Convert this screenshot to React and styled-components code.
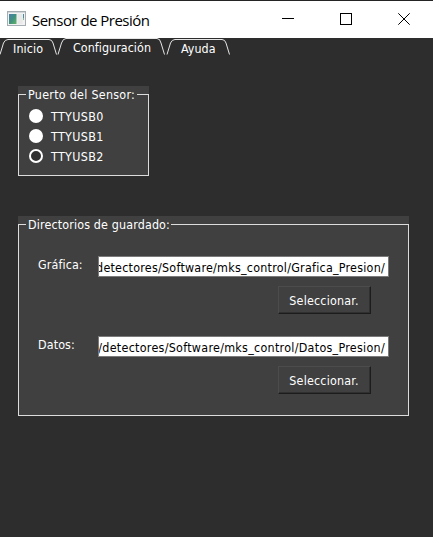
import React from "react";
import styled, { createGlobalStyle } from "styled-components";

const GlobalStyle = createGlobalStyle`
  body { margin: 0; background: #2d2d2d; }
  * { box-sizing: border-box; }
`;

const Window = styled.main`
  width: 433px;
  height: 537px;
  overflow: hidden;
  display: flex;
  flex-direction: column;
  background: #2d2d2d;
  color: #fff;
  font: 12.4px/16px "DejaVu Sans Condensed", "DejaVu Sans", sans-serif;
  font-stretch: condensed;
  white-space: nowrap;
`;

const Label = styled.span`
  display: block;
  letter-spacing: ${(p) => p.$track || 0}px;
`;

const TitleBar = styled.header`
  height: 38px;
  flex: none;
  display: flex;
  align-items: center;
  background: #fff;
  border-top: 1px solid #242424;
  padding-left: 7px;
  color: #000;
`;

const Title = styled.h1`
  flex: 1;
  margin: 0 0 0 6px;
  font: 400 15px/20px "Open Sans", "Noto Sans", sans-serif;
  letter-spacing: -0.52px;
`;

const WindowButton = styled.button`
  width: 58px;
  height: 37px;
  padding: 0;
  border: 0;
  background: none;
  display: grid;
  place-items: center;
  svg { display: block; }
`;

const Tabs = styled.nav`
  display: flex;
  height: 18px;
  flex: none;
`;

const TabBox = styled.div`
  position: relative;
  width: ${(p) => p.$width}px;
  margin-right: 1px;
  padding: ${(p) => (p.$active ? 2 : 3)}px 0 0 ${(p) => p.$inset}px;
`;

const TabOutline = styled.svg`
  position: absolute;
  left: 0;
  top: 0;
  overflow: visible;
`;

const Page = styled.div`
  padding: 30px 0 0 18px;
`;

const Group = styled.section`
  width: ${(p) => p.$width}px;
  height: ${(p) => p.$height}px;
  margin-bottom: 40px;
  padding-top: 8px;
  background: #404040;
`;

const GroupFrame = styled.fieldset`
  height: 100%;
  min-width: 0;
  margin: 0;
  padding: 0;
  border: 1px solid #dcdcdc;
  border-top: 0;
`;

const GroupHeading = styled.div`
  display: flex;
  height: 1px;
  &::before, &::after { content: ""; height: 1px; background: #dcdcdc; }
  &::before { width: 7px; }
  &::after { flex: 1; }
`;

const GroupTitle = styled.div`
  width: ${(p) => p.$width}px;
  height: 16px;
  margin-top: -7px;
  padding-left: 2px;
`;

const Options = styled.div`
  padding: 11px 0 0 10px;
`;

const Option = styled.label`
  display: flex;
  align-items: center;
  height: 20px;
  gap: 8px;
  & > span { padding-top: 2px; }
`;

const Radio = styled.i`
  width: 14px;
  height: 14px;
  border: 2px solid #fff;
  border-radius: 50%;
  background: ${(p) => (p.$checked ? "#303030" : "#fff")};
`;

const Directory = styled.div`
  height: 80px;
  padding: 0 19px;
`;

const Directories = styled.div`
  padding-top: 31px;
`;

const Field = styled.div`
  display: flex;
  height: 21px;
`;

const FieldName = styled.div`
  width: 60px;
  padding-top: 1px;
`;

const PathBox = styled.div`
  width: 291px;
  height: 21px;
  border: 1px solid #7a7a7a;
  background: #fff;
  color: #000;
  display: flex;
  justify-content: flex-end;
  overflow: hidden;
  padding: 3px 3px 0 0;
`;

const Button = styled.button`
  display: block;
  width: 93px;
  height: 28px;
  margin: 9px 0 0 240px;
  padding: 2px 1px 0 0;
  font: inherit;
  font-stretch: condensed;
  color: #fff;
  background: #404040;
  border: solid;
  border-width: 1px;
  border-color: #4c4c4c #1c1c1c #1c1c1c #4c4c4c;
  box-shadow: inset -1px -1px #303030;
`;

const IconSvg = styled.svg`
  margin-bottom: 2px;
`;

function AppIcon() {
  return (
    <IconSvg width="19" height="15" viewBox="0 0 19 15">
      <defs>
        <linearGradient id="screen" x1="0" y1="0" x2="1" y2="1">
          <stop offset="0" stopColor="#4b7fae" />
          <stop offset=".5" stopColor="#40917f" />
          <stop offset="1" stopColor="#63b665" />
        </linearGradient>
      </defs>
      <rect x=".5" y=".5" width="18" height="14" fill="#f2f2f2" stroke="#a6adb2" />
      <rect x="2" y="3" width="7.5" height="10" fill="url(#screen)" />
      <path d="M1 1.5H18" stroke="#d3d8dc" />
      <path d="M10.5 3H15.5V13H10.5Z" fill="#e9e9e9" />
      <path d="M16.5 3V7" stroke="#4a8f9b" />
      <path d="M16.5 7V9" stroke="#8bb6a0" />
    </IconSvg>
  );
}

function Tab({ label, width, line, inset, active, track }) {
  const top = active ? 0.5 : 1.5;
  const d = `M0 16.5L3.5 5Q5 ${top} 8 ${top}H${line}Q${line + 3} ${top} ${line + 4} 5L${line + 7.5} 16.5`;
  return (
    <TabBox $width={width} $inset={inset} $active={active}>
      <TabOutline width={width} height="18">
        <path d={d} fill="none" stroke="#e6e6e6" />
      </TabOutline>
      <Label $track={track}>{label}</Label>
    </TabBox>
  );
}

function GroupBox({ title, titleWidth, track, width, height, children }) {
  return (
    <Group $width={width} $height={height}>
      <GroupFrame>
        <GroupHeading>
          <GroupTitle $width={titleWidth}><Label $track={track}>{title}</Label></GroupTitle>
        </GroupHeading>
        {children}
      </GroupFrame>
    </Group>
  );
}

function DirectoryRow({ name, path, nameTrack, pathTrack }) {
  return (
    <Directory>
      <Field>
        <FieldName><Label $track={nameTrack}>{name}</Label></FieldName>
        <PathBox><Label $track={pathTrack}>{path}</Label></PathBox>
      </Field>
      <Button><Label $track={0.2}>Seleccionar.</Label></Button>
    </Directory>
  );
}

export default function App() {
  return (
    <>
      <GlobalStyle />
      <Window>
        <TitleBar>
          <AppIcon />
          <Title>Sensor de Presión</Title>
          <WindowButton aria-label="Minimizar">
            <svg width="12" height="13"><path d="M0 5.5H12" stroke="#000" /></svg>
          </WindowButton>
          <WindowButton aria-label="Maximizar">
            <svg width="12" height="13"><rect x=".5" y=".5" width="11" height="11" fill="none" stroke="#000" /></svg>
          </WindowButton>
          <WindowButton aria-label="Cerrar">
            <svg width="12" height="13"><path d="M.3 .3L11.7 11.7M11.7 .3L.3 11.7" stroke="#000" /></svg>
          </WindowButton>
        </TitleBar>
        <Tabs>
          <Tab label="Inicio" width={57} line={49} inset={13} track={0.1} />
          <Tab label="Configuración" width={108} line={99} inset={15} track={0.05} active />
          <Tab label="Ayuda" width={64} line={55} inset={14} track={0.05} />
        </Tabs>
        <Page>
          <GroupBox title="Puerto del Sensor:" titleWidth={111} track={0.28} width={131} height={90}>
            <Options>
              {["TTYUSB0", "TTYUSB1", "TTYUSB2"].map((port, i) => (
                <Option key={port}><Radio $checked={i === 2} /><Label $track={0.35}>{port}</Label></Option>
              ))}
            </Options>
          </GroupBox>
          <GroupBox title="Directorios de guardado:" titleWidth={145} track={0.15} width={391} height={200}>
            <Directories>
              <DirectoryRow name="Gráfica:" path="detectores/Software/mks_control/Grafica_Presion/" nameTrack={0.12} pathTrack={0.25} />
              <DirectoryRow name="Datos:" path="/detectores/Software/mks_control/Datos_Presion/" nameTrack={0.12} pathTrack={0.29} />
            </Directories>
          </GroupBox>
        </Page>
      </Window>
    </>
  );
}
